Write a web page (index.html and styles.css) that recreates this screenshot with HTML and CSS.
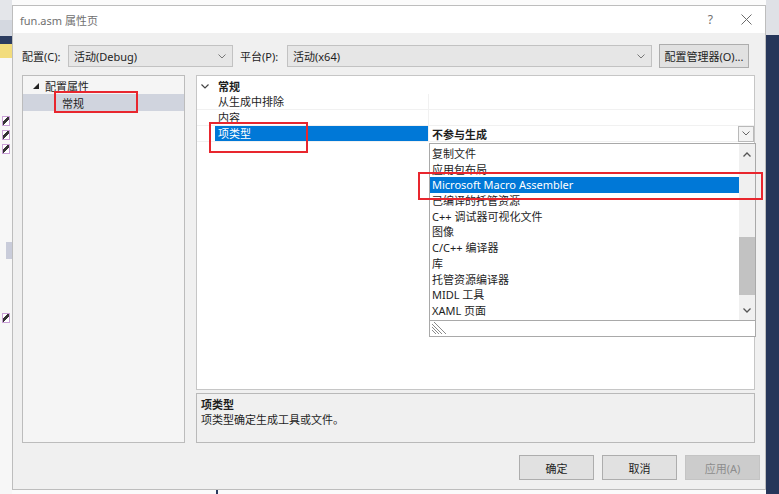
FILE: index.html
```html
<!DOCTYPE html>
<html lang="zh-CN">
<head>
    <meta charset="UTF-8">
    <meta name="viewport" content="width=device-width, initial-scale=1.0">
    <title>fun.asm 属性页</title>

    <link rel="stylesheet" href="styles.css">
</head>
<body>
    <main class="screen">
        <div class="backdrop-left">
            <div class="bl bl-top"></div>
            <div class="bl bl-navy"></div>
            <div class="bl bl-yellow"></div>
            <div class="bl bl-white"></div>
            <div class="bl bl-icon"></div>
            <div class="bl bl-icon"></div>
            <div class="bl bl-icon"></div>
            <div class="bl bl-gap"></div>
            <div class="bl bl-grey"></div>
            <div class="bl bl-gap2"></div>
            <div class="bl bl-icon"></div>
        </div>

        <section class="dialog">
            <div class="titlebar">
                <span class="title">fun.asm 属性页</span>
                <div class="title-buttons">
                    <span class="help">?</span>
                    <svg class="close" width="11" height="11" viewBox="0 0 11 11">
                        <path d="M0.5 0.5 L10.5 10.5 M10.5 0.5 L0.5 10.5" stroke="#6b6b6b" stroke-width="1" fill="none"/>
                    </svg>
                </div>
            </div>

            <div class="config-row">
                <span class="lbl lbl-config">配置(C):</span>
                <div class="combo combo-config">
                    <span>活动(Debug)</span>
                    <svg width="8" height="5" viewBox="0 0 8 5"><path d="M0.5 0.5 L4 4 L7.5 0.5" stroke="#777" fill="none"/></svg>
                </div>
                <span class="lbl lbl-platform">平台(P):</span>
                <div class="combo combo-platform">
                    <span>活动(x64)</span>
                    <svg width="8" height="5" viewBox="0 0 8 5"><path d="M0.5 0.5 L4 4 L7.5 0.5" stroke="#777" fill="none"/></svg>
                </div>
                <button class="btn btn-manager">配置管理器(O)...</button>
            </div>

            <div class="main">
                <div class="tree">
                    <div class="tree-node">
                        <svg class="tri" width="6" height="6" viewBox="0 0 6 6"><polygon points="6,0 6,6 0,6" fill="#222"/></svg>
                        <span>配置属性</span>
                    </div>
                    <div class="tree-node tree-child selected">常规</div>
                </div>

                <div class="right-col">
                    <div class="grid">
                        <div class="grid-row grid-header">
                            <svg class="expand" width="8" height="5" viewBox="0 0 8 5"><path d="M0.5 0.5 L4 4 L7.5 0.5" stroke="#444" stroke-width="1.2" fill="none"/></svg>
                            <span>常规</span>
                        </div>
                        <div class="grid-row">
                            <div class="prop-name">从生成中排除</div>
                            <div class="prop-value"></div>
                        </div>
                        <div class="grid-row">
                            <div class="prop-name">内容</div>
                            <div class="prop-value"></div>
                        </div>
                        <div class="grid-row">
                            <div class="prop-name active">项类型</div>
                            <div class="prop-value editing">
                                <span>不参与生成</span>
                                <span class="drop-btn">
                                    <svg width="8" height="5" viewBox="0 0 8 5"><path d="M0.5 0.5 L4 4 L7.5 0.5" stroke="#666" fill="none"/></svg>
                                </span>
                            </div>
                        </div>

                        <div class="dropdown">
                            <div class="drop-list">
                                <ul class="drop-items">
                                    <li>复制文件</li>
                                    <li>应用包布局</li>
                                    <li class="picked">Microsoft Macro Assembler</li>
                                    <li>已编译的托管资源</li>
                                    <li>C++ 调试器可视化文件</li>
                                    <li>图像</li>
                                    <li>C/C++ 编译器</li>
                                    <li>库</li>
                                    <li>托管资源编译器</li>
                                    <li>MIDL 工具</li>
                                    <li>XAML 页面</li>
                                </ul>
                                <div class="scrollbar">
                                    <svg class="arrow-up" width="8" height="5" viewBox="0 0 8 5"><path d="M0.5 4.5 L4 1 L7.5 4.5" stroke="#555" stroke-width="1.3" fill="none"/></svg>
                                    <div class="thumb"></div>
                                    <svg class="arrow-down" width="8" height="5" viewBox="0 0 8 5"><path d="M0.5 0.5 L4 4 L7.5 0.5" stroke="#555" stroke-width="1.3" fill="none"/></svg>
                                </div>
                            </div>
                            <div class="drop-grip">
                                <svg width="14" height="12" viewBox="0 0 14 12">
                                    <path d="M0 2 L10 12 M0 5 L7 12 M0 8 L4 12 M2 0 L14 12" stroke="#8a8a8a" stroke-width="1" fill="none"/>
                                </svg>
                            </div>
                        </div>
                    </div>

                    <div class="desc">
                        <div class="desc-title">项类型</div>
                        <div class="desc-text">项类型确定生成工具或文件。</div>
                    </div>
                </div>
            </div>

            <div class="buttons">
                <button class="btn">确定</button>
                <button class="btn">取消</button>
                <button class="btn" disabled>应用(A)</button>
            </div>
        </section>

        <div class="backdrop-right"></div>

        <div class="mark mark-tree"></div>
        <div class="mark mark-prop"></div>
        <div class="mark mark-item"></div>
        <div class="tick"></div>
    </main>
</body>
</html>
```

FILE: styles.css
```css
:root {
    --face-color: #f0f0f0;
    --border-color: #adadad;
    --select-color: #0078d7;
    --text-color: #1e1e1e;
    --mark-color: #e8262e;
}

* {
    box-sizing: border-box;
}

body {
    margin: 0;
    font-family: "Noto Sans", "Noto Sans CJK SC", sans-serif;
    font-size: 11px;
    color: var(--text-color);
}

button {
    font: inherit;
    color: inherit;
}

.screen {
    position: relative;
    width: 779px;
    height: 494px;
    display: flex;
    overflow: hidden;
    background: #fbfbfb;
}

/* whatever sits behind the dialog */
.backdrop-left {
    width: 12px;
    display: flex;
    flex-direction: column;
    background: #f7f7f7;
}

.bl-top {
    height: 36px;
    background: linear-gradient(#e4e6ea 0 20px, #d4d8e0 20px);
}

.bl-navy {
    height: 8px;
    background: #2b3c60;
}

.bl-yellow {
    height: 14px;
    background: #f2dc7c;
}

.bl-white {
    height: 56px;
}

.bl-icon {
    width: 8px;
    height: 10px;
    margin: 2px 0 2px 2px;
    border: 1px solid #c9a0d6;
    background: linear-gradient(135deg, #fff 0 35%, #333 35% 60%, #fff 60%);
}

.bl-gap {
    height: 86px;
}

.bl-grey {
    width: 6px;
    height: 17px;
    margin-left: 6px;
    background: #c9ccda;
}

.bl-gap2 {
    height: 52px;
}

.backdrop-right {
    flex: 1;
    background: linear-gradient(#dfe1e6 0 35px, #26365a 35px);
}

.dialog {
    width: 754px;
    height: 485px;
    margin-top: 5px;
    display: flex;
    flex-direction: column;
    background: var(--face-color);
    border: 1px solid #bdbdbd;
}

.titlebar {
    height: 27px;
    display: flex;
    align-items: center;
    justify-content: space-between;
    padding: 0 13px 0 7px;
    background: #fff;
}

.title {
    color: #707070;
    font-size: 11px;
}

.title-buttons {
    display: flex;
    align-items: center;
    gap: 28px;
}

.help {
    color: #707070;
    font-size: 12px;
}

.config-row {
    height: 24px;
    margin-top: 11px;
    padding-left: 9px;
    display: flex;
    align-items: center;
}

.lbl {
    flex: none;
}

.lbl-config {
    width: 46px;
}

.lbl-platform {
    width: 47px;
    margin-left: 7px;
}

.combo {
    height: 22px;
    display: flex;
    align-items: center;
    justify-content: space-between;
    padding: 0 6px 0 5px;
    background: #e6e6e6;
    border: 1px solid #c2c2c2;
}

.combo-config {
    width: 165px;
}

.combo-platform {
    width: 365px;
}

.btn {
    width: 75px;
    height: 25px;
    padding: 0;
    background: #e1e1e1;
    border: 1px solid var(--border-color);
}

.btn:disabled {
    background: #cccccc;
    border-color: #c4c4c4;
    color: #8d8d8d;
}

.btn-manager {
    width: 90px;
    height: 24px;
    margin-left: 7px;
}

.main {
    height: 368px;
    margin-top: 7px;
    padding-left: 9px;
    display: flex;
    gap: 11px;
}

.tree {
    width: 163px;
    padding-top: 2px;
    background: #f5f5f5;
    border: 1px solid #bcbcbc;
}

.tree-node {
    height: 16px;
    display: flex;
    align-items: center;
    gap: 6px;
    padding-left: 10px;
}

.tree-child {
    height: 17px;
    padding-left: 39px;
}

.tree-node.selected {
    background: #d0d4de;
}

.right-col {
    width: 559px;
    display: flex;
    flex-direction: column;
    gap: 3px;
}

.grid {
    position: relative;
    height: 315px;
    padding-top: 2px;
    background: #fff;
    border: 1px solid #c6c6c6;
}

.grid-row {
    height: 16px;
    display: flex;
    border-bottom: 1px solid #f1f1f1;
}

.grid-header {
    align-items: center;
    gap: 9px;
    padding-left: 4px;
    font-weight: bold;
    border-bottom: none;
}

.prop-name {
    width: 214px;
    margin-left: 18px;
    padding-left: 3px;
    line-height: 15px;
    border-right: 1px solid #f1f1f1;
}

.prop-name.active {
    background: var(--select-color);
    color: #fff;
}

.prop-value {
    flex: 1;
    display: flex;
    align-items: center;
    justify-content: space-between;
    padding-left: 3px;
}

.prop-value.editing {
    font-weight: bold;
}

.drop-btn {
    width: 16px;
    height: 16px;
    display: flex;
    align-items: center;
    justify-content: center;
    background: #f3f3f3;
    border: 1px solid #b9b9b9;
}

.dropdown {
    position: absolute;
    left: 232px;
    top: 67px;
    width: 327px;
    height: 194px;
    display: flex;
    flex-direction: column;
    background: #fff;
    border: 1px solid #a9a9a9;
}

.drop-list {
    height: 177px;
    display: flex;
    border-bottom: 1px solid #a9a9a9;
}

.drop-items {
    flex: 1;
    margin: 0;
    padding: 2px 0 0;
    list-style: none;
}

.drop-items li {
    height: 15.7px;
    line-height: 15.7px;
    padding-left: 2px;
}

.drop-items li.picked {
    background: var(--select-color);
    color: #fff;
}

.scrollbar {
    width: 16px;
    display: flex;
    flex-direction: column;
    align-items: center;
    padding: 8px 0 7px;
    background: #f0f0f0;
}

.thumb {
    width: 16px;
    height: 58px;
    margin-top: 80px;
    background: #c2c2c2;
}

.arrow-down {
    margin-top: auto;
}

.drop-grip {
    flex: 1;
    padding: 1px 0 0 2px;
}

.drop-grip svg {
    display: block;
}

.desc {
    height: 50px;
    padding: 3px 4px;
    line-height: 15px;
    background: var(--face-color);
    border: 1px solid #b9b9b9;
}

.desc-title {
    font-weight: bold;
}

.buttons {
    margin-top: 12px;
    padding-right: 5px;
    display: flex;
    justify-content: flex-end;
    gap: 8px;
}

/* red annotation boxes over the screenshot */
.mark {
    position: absolute;
    border: 2px solid var(--mark-color);
}

.mark-tree {
    left: 54px;
    top: 91px;
    width: 84px;
    height: 22px;
}

.mark-prop {
    left: 209px;
    top: 122px;
    width: 99px;
    height: 31px;
}

.mark-item {
    left: 418px;
    top: 172px;
    width: 345px;
    height: 28px;
}

.tick {
    position: absolute;
    left: 216px;
    top: 490px;
    width: 2px;
    height: 4px;
    background: #2b3c60;
}
```
